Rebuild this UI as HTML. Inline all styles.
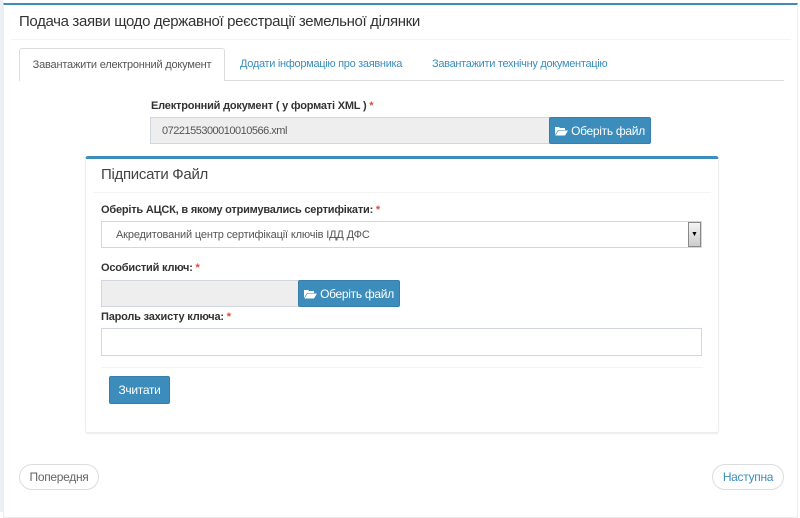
<!DOCTYPE html>
<html><head><meta charset="utf-8"><style>
*{box-sizing:border-box;margin:0;padding:0}
body{width:800px;height:512px;background:#fff;font-family:"Liberation Sans",sans-serif;position:relative;overflow:hidden;color:#333}
.a{position:absolute}
.outer{left:3px;top:3px;width:795px;height:515px;border:1px solid #ececec;border-top:2px solid #3c8dbc;background:#fff}
.lbl{font-weight:bold;font-size:11px;letter-spacing:-0.2px;color:#333}
.lbl span{color:#dd4b39}
.btn{background:#3c8dbc;border:1px solid #367fa9;color:#fff;font-size:12px;letter-spacing:-0.3px;display:flex;align-items:center;justify-content:center;border-radius:2px}
.btn svg{margin-right:3px}
.inp{border:1px solid #d2d6de}
.rb{border:1px solid #ddd;border-radius:14px;font-size:12px;letter-spacing:-0.3px;display:flex;align-items:center;justify-content:center;background:#fff}
</style></head><body>
<div class="a" style="left:0;top:0;width:3px;height:512px;background:#ecf0f5"></div>
<div class="a outer"></div>
<div class="a" style="left:19px;top:13px;font-size:15px;letter-spacing:-0.35px;color:#333">Подача заяви щодо державної реєстрації земельної ділянки</div>
<div class="a" style="left:11px;top:39px;width:780px;height:1px;background:#f4f4f4"></div>
<div class="a" style="left:19px;top:80px;width:765px;height:1px;background:#ddd"></div>
<div class="a" style="left:19px;top:48px;width:206px;height:33px;border:1px solid #ddd;border-bottom:none;background:#fff;border-radius:3px 3px 0 0;font-size:11px;letter-spacing:-0.2px;color:#555;display:flex;align-items:center;justify-content:center">Завантажити електронний документ</div>
<div class="a" style="left:240px;top:58px;font-size:11px;letter-spacing:-0.3px;color:#3c8dbc">Додати інформацію про заявника</div>
<div class="a" style="left:432px;top:58px;font-size:11px;letter-spacing:-0.3px;color:#3c8dbc">Завантажити технічну документацію</div>
<div class="a lbl" style="left:151px;top:100px">Електронний документ ( у форматі XML ) <span>*</span></div>
<div class="a inp" style="left:150px;top:117px;width:400px;height:27px;background:#eee;font-size:11px;letter-spacing:-0.5px;color:#555;padding:7px 11px">0722155300010010566.xml</div>
<div class="a btn" style="left:549px;top:117px;width:102px;height:27px"><svg width="13" height="10" viewBox="0 0 13 10"><path d="M0 1h4l1 1h5v2H3L0 9z" fill="#fff"/><path d="M3.5 4.5H13L10 9.5H0.5z" fill="#fff"/></svg>Оберіть файл</div>
<div class="a" style="left:85px;top:156px;width:634px;height:277px;border:1px solid #eee;border-top:3px solid #3c8dbc;border-radius:3px;box-shadow:0 1px 1px rgba(0,0,0,.08)"></div>
<div class="a" style="left:101px;top:166px;font-size:15px;letter-spacing:-0.3px;color:#444">Підписати Файл</div>
<div class="a" style="left:93px;top:192px;width:618px;height:1px;background:#f4f4f4"></div>
<div class="a lbl" style="left:101px;top:204px">Оберіть АЦСК, в якому отримувались сертифікати: <span>*</span></div>
<div class="a inp" style="left:101px;top:221px;width:601px;height:27px;font-size:11px;letter-spacing:-0.15px;color:#555;padding:7px 14px">Акредитований центр сертифікації ключів ІДД ДФС</div>
<div class="a" style="left:688px;top:222px;width:13px;height:25px;background:linear-gradient(#f4f4f4,#ccc);border:1px solid #888;font-size:7px;text-align:center;line-height:23px;color:#000">▼</div>
<div class="a lbl" style="left:101px;top:262px">Особистий ключ: <span>*</span></div>
<div class="a inp" style="left:101px;top:280px;width:198px;height:27px;background:#eee"></div>
<div class="a btn" style="left:298px;top:280px;width:102px;height:27px"><svg width="13" height="10" viewBox="0 0 13 10"><path d="M0 1h4l1 1h5v2H3L0 9z" fill="#fff"/><path d="M3.5 4.5H13L10 9.5H0.5z" fill="#fff"/></svg>Оберіть файл</div>
<div class="a lbl" style="left:101px;top:311px">Пароль захисту ключа: <span>*</span></div>
<div class="a inp" style="left:101px;top:328px;width:601px;height:28px"></div>
<div class="a" style="left:101px;top:367px;width:602px;height:1px;background:#f4f4f4"></div>
<div class="a btn" style="left:109px;top:376px;width:61px;height:28px">Зчитати</div>
<div class="a rb" style="left:19px;top:464px;width:80px;height:26px;color:#666">Попередня</div>
<div class="a rb" style="left:712px;top:464px;width:72px;height:26px;color:#3c8dbc">Наступна</div>
</body></html>
